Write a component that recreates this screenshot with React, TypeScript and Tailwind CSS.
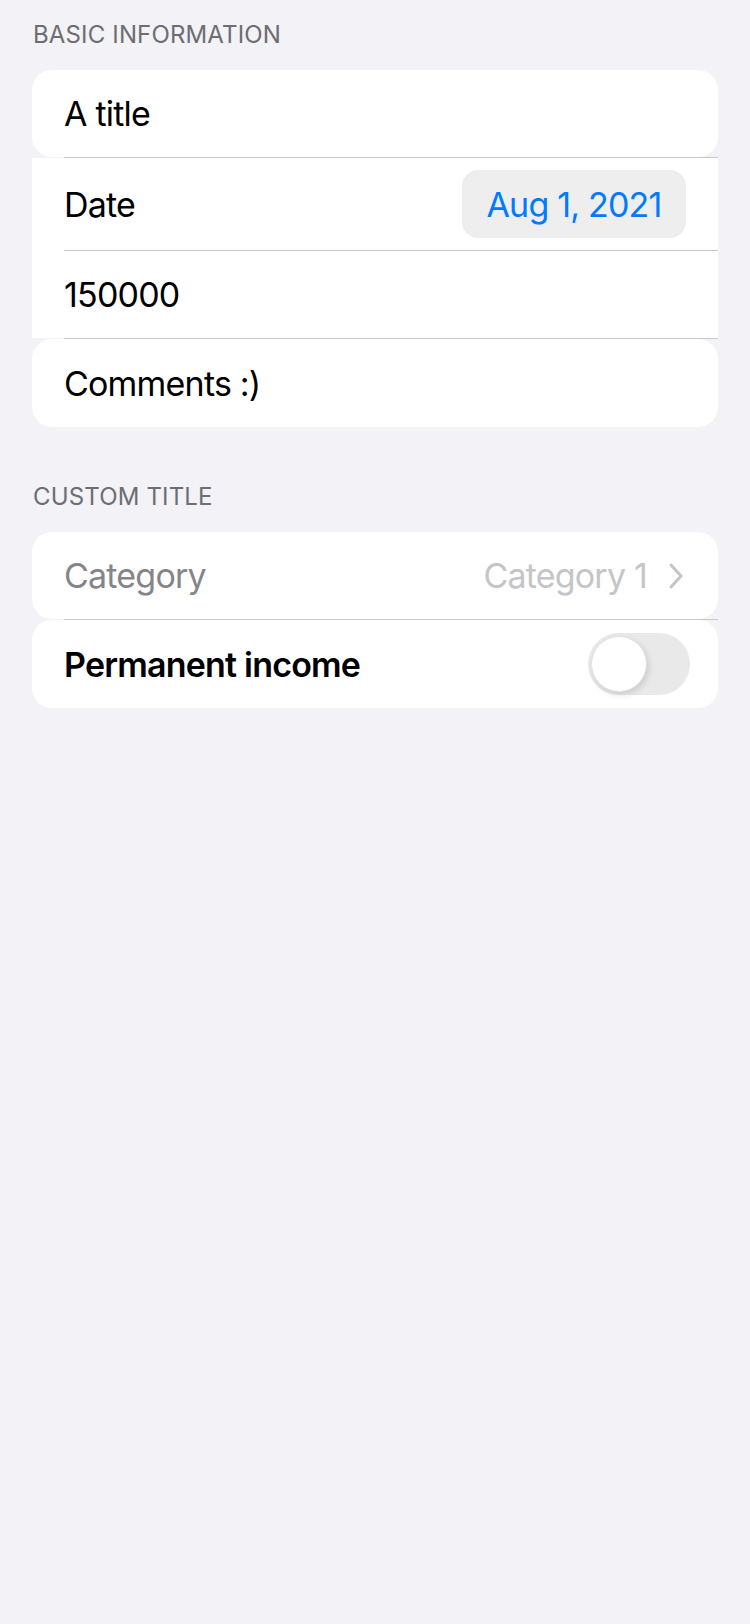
const Sep = ({ fill = false }: { fill?: boolean }) => (
  <div className={`h-px pl-[32px] ${fill ? 'bg-white' : 'bg-[#f2f2f7]'}`}>
    <div className="h-px bg-[#c8c8cc]" />
  </div>
);

const SectionHeader = ({ children }: { children: string }) => (
  <h2 className="pl-[1px] text-[24px] leading-[32px] tracking-[0.15px] text-[#6d6d72] uppercase">
    {children}
  </h2>
);

const Toggle = () => (
  <div className="flex h-[62px] w-[102px] items-center rounded-full bg-[#e9e9ea] p-[3px]">
    <div className="h-[56px] w-[56px] rounded-full border border-[#e2e2e4] bg-white shadow-[2px_3px_6px_rgba(0,0,0,0.12)]" />
  </div>
);

export default function App() {
  return (
    <div className="min-h-screen bg-[#f2f2f7] px-[32px] pt-[19px] font-['Inter',sans-serif] text-[34px] tracking-[-0.8px] text-black">
      <SectionHeader>Basic Information</SectionHeader>

      <div className="mt-[19px]">
        <div className="flex h-[87px] items-center rounded-[20px] bg-white px-[32px]">A title</div>
        <Sep />
        <div className="flex h-[92px] items-center justify-between bg-white pl-[32px] pr-[32px]">
          <span>Date</span>
          <span className="flex h-[68px] w-[224px] items-center justify-center rounded-[16px] bg-[#eeeeef] text-[#007aff]">
            Aug 1, 2021
          </span>
        </div>
        <Sep fill />
        <div className="flex h-[87px] items-center bg-white px-[32px]">150000</div>
        <Sep />
        <div className="flex h-[88px] items-center rounded-[20px] bg-white px-[32px]">Comments :)</div>
      </div>

      <div className="mt-[54px]">
        <SectionHeader>Custom Title</SectionHeader>
      </div>

      <div className="mt-[19px]">
        <div className="flex h-[87px] items-center justify-between rounded-[20px] bg-white pl-[32px] pr-[35px]">
          <span className="text-[#858589]">Category</span>
          <span className="flex items-center gap-[22px] text-[#c5c5c7]">
            Category 1
            <svg width="14" height="26" viewBox="0 0 14 26" fill="none">
              <polyline
                points="2,2 12,13 2,24"
                stroke="#c5c5c7"
                strokeWidth="3"
                strokeLinecap="round"
                strokeLinejoin="round"
              />
            </svg>
          </span>
        </div>
        <Sep />
        <div className="flex h-[88px] items-center justify-between rounded-[20px] bg-white pl-[32px] pr-[28px]">
          <span className="font-semibold">Permanent income</span>
          <Toggle />
        </div>
      </div>
    </div>
  );
}
